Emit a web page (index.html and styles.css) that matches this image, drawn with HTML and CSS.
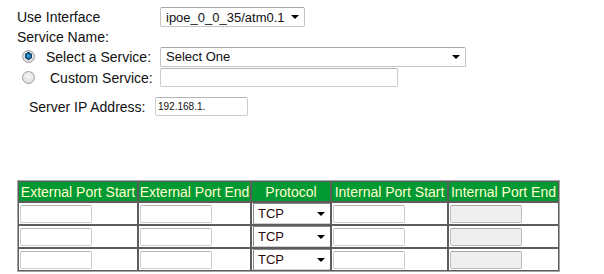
FILE: index.html
```html
<!DOCTYPE html>
<html lang="en">
<head>
    <meta charset="UTF-8">
    <title>Port Forwarding</title>
    <link rel="stylesheet" href="styles.css">
</head>
<body>
    <div class="page">
        <div class="row row-iface">
            <span class="label label-iface">Use Interface</span>
            <span class="sel sel-iface">
                <select><option>ipoe_0_0_35/atm0.1</option></select>
            </span>
        </div>
        <div class="row row-title">Service Name:</div>
        <div class="row row-radio">
            <input type="radio" name="srv" class="radio" checked>
            <span class="label label-select">Select a Service:</span>
            <span class="sel sel-service">
                <select><option>Select One</option></select>
            </span>
        </div>
        <div class="row row-radio">
            <input type="radio" name="srv" class="radio">
            <span class="label label-custom">Custom Service:</span>
            <input type="text" class="txt txt-custom">
        </div>
        <div class="row row-ip">
            <span class="label label-ip">Server IP Address:</span>
            <input type="text" class="txt txt-ip" value="192.168.1.">
        </div>

        <table class="ports">
            <colgroup>
                <col style="width:120px">
                <col style="width:113px">
                <col style="width:80px">
                <col style="width:117px">
                <col style="width:111px">
            </colgroup>
            <tr>
                <th>External Port Start</th>
                <th>External Port End</th>
                <th>Protocol</th>
                <th>Internal Port Start</th>
                <th>Internal Port End</th>
            </tr>
            <tr>
                <td><input type="text" class="txt port"></td>
                <td><input type="text" class="txt port"></td>
                <td><span class="sel sel-proto"><select><option>TCP</option></select></span></td>
                <td><input type="text" class="txt port"></td>
                <td><input type="text" class="txt port" disabled></td>
            </tr>
            <tr>
                <td><input type="text" class="txt port"></td>
                <td><input type="text" class="txt port"></td>
                <td><span class="sel sel-proto"><select><option>TCP</option></select></span></td>
                <td><input type="text" class="txt port"></td>
                <td><input type="text" class="txt port" disabled></td>
            </tr>
            <tr>
                <td><input type="text" class="txt port"></td>
                <td><input type="text" class="txt port"></td>
                <td><span class="sel sel-proto"><select><option>TCP</option></select></span></td>
                <td><input type="text" class="txt port"></td>
                <td><input type="text" class="txt port" disabled></td>
            </tr>
        </table>
    </div>
</body>
</html>
```

FILE: styles.css
```css
body {
    margin: 0;
    background: #fff;
    font-family: "Liberation Sans", Arial, sans-serif;
    font-size: 14px;
    color: #111;
}

.page {
    padding: 7px 0 0 17px;
}

.row {
    display: flex;
    align-items: center;
}

/* top form rows */
.row-iface {
    height: 20px;
}

.row-title {
    height: 19px;
}

.row-radio {
    height: 21px;
}

.row-ip {
    height: 19px;
    margin-top: 9px;
}

.label {
    white-space: nowrap;
}

.label-iface {
    width: 143px;
}

.label-select {
    width: 114px;
    margin-left: 11px;
}

.label-custom {
    width: 110px;
    margin-left: 15px;
}

.label-ip {
    width: 126px;
    margin-left: 12px;
}

/* radio buttons */
.radio {
    appearance: none;
    -webkit-appearance: none;
    width: 13px;
    height: 13px;
    margin: 0 0 0 5px;
    border: 1px solid #a0a0a0;
    border-radius: 50%;
    background: radial-gradient(circle at 50% 40%, #f8f8f8, #d4d4d4);
    box-sizing: border-box;
}

.radio:checked {
    background: radial-gradient(circle at 50% 45%, #5fb4e8 0, #1b6fa8 2px, #0d3d66 3.5px, #e8e8e8 4px, #cfcfcf 6px);
}

/* selects */
.sel {
    position: relative;
    display: inline-block;
}

.sel select {
    appearance: none;
    -webkit-appearance: none;
    width: 100%;
    height: 100%;
    margin: 0;
    padding: 0 0 0 5px;
    border: 1px solid #c4c4c4;
    border-top-color: #a8a8a8;
    border-radius: 2px;
    background: #fff;
    font-family: "Liberation Sans", Arial, sans-serif;
    font-size: 13px;
    color: #111;
    box-sizing: border-box;
}

.sel::after {
    content: "";
    position: absolute;
    right: 6px;
    top: 50%;
    margin-top: -2px;
    border-left: 4px solid transparent;
    border-right: 4px solid transparent;
    border-top: 4px solid #000;
    pointer-events: none;
}

.sel-iface {
    width: 145px;
    height: 20px;
}

.sel-service {
    width: 306px;
    height: 20px;
}

.sel-proto {
    width: 78px;
    height: 21px;
    display: block;
}

.sel-proto select {
    border: 1px solid #8a8a8a;
    border-right-color: #d0d0d0;
    border-bottom-color: #d0d0d0;
    border-radius: 0;
    padding-left: 4px;
    color: #2a0a0a;
}

/* text inputs */
.txt {
    margin: 0;
    padding: 0 2px;
    border: 1px solid #cdcdcd;
    border-top-color: #b4b4b4;
    border-radius: 2px;
    background: #fff;
    font-family: "Liberation Sans", Arial, sans-serif;
    box-sizing: border-box;
}

.txt-custom {
    width: 238px;
    height: 19px;
}

.txt-ip {
    width: 93px;
    height: 19px;
    font-size: 10px;
    color: #111;
}

/* port table */
.ports {
    margin-top: 64px;
    border-collapse: separate;
    border-spacing: 0;
    table-layout: fixed;
    width: 541px;
    border: 1px solid #a6a6a6;
}

.ports th,
.ports td {
    border: 1px solid #5c5c5c;
    padding: 0 1px;
    white-space: nowrap;
    overflow: hidden;
}

.ports th {
    height: 19px;
    background: #009933;
    color: #ffffcc;
    font-weight: normal;
    font-size: 14px;
    text-align: center;
    padding: 0;
}

.ports td {
    height: 21px;
}

.port {
    display: block;
    width: 72px;
    height: 18px;
}

.port:disabled {
    background: #efefef;
    border-color: #bdbdbd;
    border-top-color: #a4a4a4;
}
```
